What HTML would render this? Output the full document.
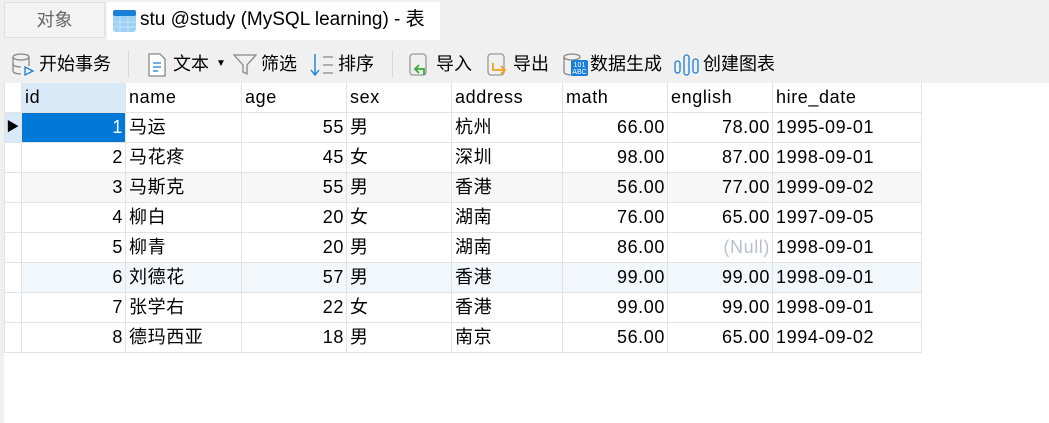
<!DOCTYPE html>
<html><head><meta charset="utf-8"><style>
*{margin:0;padding:0;box-sizing:border-box}
body{width:1049px;height:423px;overflow:hidden;background:#fff;font-family:"Liberation Sans","Noto Sans CJK SC",sans-serif;font-size:18px;color:#000;position:relative}
.abs{position:absolute}
.tabbar{left:0;top:0;width:1049px;height:40px;background:#f0f0f0}
.tab1{left:4px;top:2px;width:101px;height:36px;background:#f3f3f3;border:1px solid #e0e0e0;color:#666;text-align:center;line-height:34px}
.tab2{left:107px;top:2px;width:333px;height:38px;background:#fff;line-height:36px;padding-left:33px;font-size:19px}
.toolbar{left:0;top:40px;width:1049px;height:43px;background:#f0f0f0}
.tb{position:absolute;top:52px;font-size:18px;line-height:24px}
.sep{position:absolute;top:50px;width:1px;height:28px;background:#d8d8d8}
table{position:absolute;left:4px;top:83px;border-collapse:collapse;table-layout:fixed;letter-spacing:0.6px}
td{height:30px;border:1px solid #e3e3e3;padding:0 3px;white-space:nowrap;overflow:hidden;line-height:28px}
tr.h td{background:#fff;border-top:none;height:29px}
td.n{text-align:right;padding-right:2px}
td.rh{padding:0}
.null{color:#b8bfd0}
</style></head><body>
<div class="abs tabbar"></div>
<div class="abs tab1">对象</div>
<div class="abs tab2">stu @study (MySQL learning) - 表</div>
<svg class="abs" style="left:113px;top:10px" width="23" height="22"><rect x="0" y="0" width="23" height="22" rx="3" fill="#9fd0f5"/><rect x="0" y="0" width="23" height="6" rx="2" fill="#1a7fd6"/><path d="M7 6V22M15 6V22M0 12H23M0 17H23" stroke="#c4e3fa" stroke-width="1"/></svg>
<div class="abs toolbar"></div>
<svg class="abs" style="left:11px;top:52px" width="24" height="26"><ellipse cx="10" cy="5" rx="8" ry="3" fill="none" stroke="#888" stroke-width="1.3"/><path d="M2 5V19c0 2 4 3 8 3M18 5v9M2 12c0 2 4 3 8 3" fill="none" stroke="#888" stroke-width="1.3"/><path d="M14 15l8 4-8 4z" fill="none" stroke="#1a7fd6" stroke-width="1.3"/></svg>
<div class="tb" style="left:39px">开始事务</div>
<div class="sep" style="left:128px"></div>
<svg class="abs" style="left:147px;top:53px" width="20" height="24"><path d="M2 1h11l5 5v17H2z" fill="#fff" stroke="#888" stroke-width="1.3"/><path d="M6 10h8M6 14h8M6 18h5" stroke="#1a7fd6" stroke-width="1.3"/></svg>
<div class="tb" style="left:173px">文本</div>
<div class="tb" style="left:216px;font-size:10px">▼</div>
<svg class="abs" style="left:233px;top:54px" width="24" height="22"><path d="M1 1h22l-9 10v9l-4-2v-7z" fill="none" stroke="#888" stroke-width="1.3"/></svg>
<div class="tb" style="left:261px">筛选</div>
<svg class="abs" style="left:310px;top:53px" width="24" height="24"><path d="M5 1v21M1 17l4 5 4-5" fill="none" stroke="#1a7fd6" stroke-width="1.4"/><path d="M13 4h10M13 12h10M13 20h10" stroke="#888" stroke-width="1.3"/></svg>
<div class="tb" style="left:338px">排序</div>
<div class="sep" style="left:392px"></div>
<svg class="abs" style="left:408px;top:53px" width="26" height="24"><rect x="2" y="1" width="16" height="21" rx="3" fill="none" stroke="#999" stroke-width="1.3"/><path d="M11 12l-4 4 4 4M7 16h9v6" fill="none" stroke="#3aa83a" stroke-width="1.8"/></svg>
<div class="tb" style="left:436px">导入</div>
<svg class="abs" style="left:486px;top:53px" width="26" height="24"><rect x="2" y="1" width="16" height="21" rx="3" fill="none" stroke="#999" stroke-width="1.3"/><path d="M7 10v7h12M15 13l4 4-4 4" fill="none" stroke="#f0a020" stroke-width="1.8"/></svg>
<div class="tb" style="left:513px">导出</div>
<svg class="abs" style="left:562px;top:52px" width="28" height="26"><ellipse cx="10" cy="5" rx="8" ry="3" fill="none" stroke="#888" stroke-width="1.3"/><path d="M2 5v15c0 2 4 3 8 3" fill="none" stroke="#888" stroke-width="1.3"/><rect x="9" y="8" width="17" height="16" rx="2" fill="#1a7fd6"/><text x="17.5" y="15" font-size="7" fill="#fff" text-anchor="middle" font-family="Liberation Sans">101</text><text x="17.5" y="22" font-size="7" fill="#fff" text-anchor="middle" font-family="Liberation Sans">ABC</text></svg>
<div class="tb" style="left:590px">数据生成</div>
<svg class="abs" style="left:674px;top:53px" width="26" height="24"><rect x="1" y="8" width="5" height="12" rx="2.5" fill="none" stroke="#1a7fd6" stroke-width="1.3"/><rect x="10" y="2" width="5" height="20" rx="2.5" fill="none" stroke="#1a7fd6" stroke-width="1.3"/><rect x="19" y="6" width="5" height="14" rx="2.5" fill="none" stroke="#1a7fd6" stroke-width="1.3"/></svg>
<div class="tb" style="left:703px">创建图表</div>
<div class="abs" style="left:0;top:83px;width:4px;height:340px;background:#f0f0f0"></div>
<table>
<colgroup><col style="width:17px"><col style="width:104px"><col style="width:116px"><col style="width:105px"><col style="width:105px"><col style="width:111px"><col style="width:105px"><col style="width:105px"><col style="width:149px"></colgroup>
<tr class="h"><td class="rh"></td><td style="background:#d9e9f7">id</td><td>name</td><td>age</td><td>sex</td><td>address</td><td>math</td><td>english</td><td>hire_date</td></tr>
<tr><td class="rh" style="background:#d9e9f7;font-size:13px;text-align:center">▶</td><td class="n" style="background:#0078d7;color:#fff">1</td><td>马运</td><td class="n">55</td><td>男</td><td>杭州</td><td class="n">66.00</td><td class="n">78.00</td><td>1995-09-01</td></tr>
<tr><td class="rh"></td><td class="n">2</td><td>马花疼</td><td class="n">45</td><td>女</td><td>深圳</td><td class="n">98.00</td><td class="n">87.00</td><td>1998-09-01</td></tr>
<tr style="background:#f7f7f7"><td class="rh" style="background:#fff"></td><td class="n">3</td><td>马斯克</td><td class="n">55</td><td>男</td><td>香港</td><td class="n">56.00</td><td class="n">77.00</td><td>1999-09-02</td></tr>
<tr><td class="rh"></td><td class="n">4</td><td>柳白</td><td class="n">20</td><td>女</td><td>湖南</td><td class="n">76.00</td><td class="n">65.00</td><td>1997-09-05</td></tr>
<tr><td class="rh"></td><td class="n">5</td><td>柳青</td><td class="n">20</td><td>男</td><td>湖南</td><td class="n">86.00</td><td class="n null">(Null)</td><td>1998-09-01</td></tr>
<tr style="background:#f2f7fc"><td class="rh" style="background:#fff"></td><td class="n">6</td><td>刘德花</td><td class="n">57</td><td>男</td><td>香港</td><td class="n">99.00</td><td class="n">99.00</td><td>1998-09-01</td></tr>
<tr><td class="rh"></td><td class="n">7</td><td>张学右</td><td class="n">22</td><td>女</td><td>香港</td><td class="n">99.00</td><td class="n">99.00</td><td>1998-09-01</td></tr>
<tr><td class="rh"></td><td class="n">8</td><td>德玛西亚</td><td class="n">18</td><td>男</td><td>南京</td><td class="n">56.00</td><td class="n">65.00</td><td>1994-09-02</td></tr>
</table>
</body></html>
